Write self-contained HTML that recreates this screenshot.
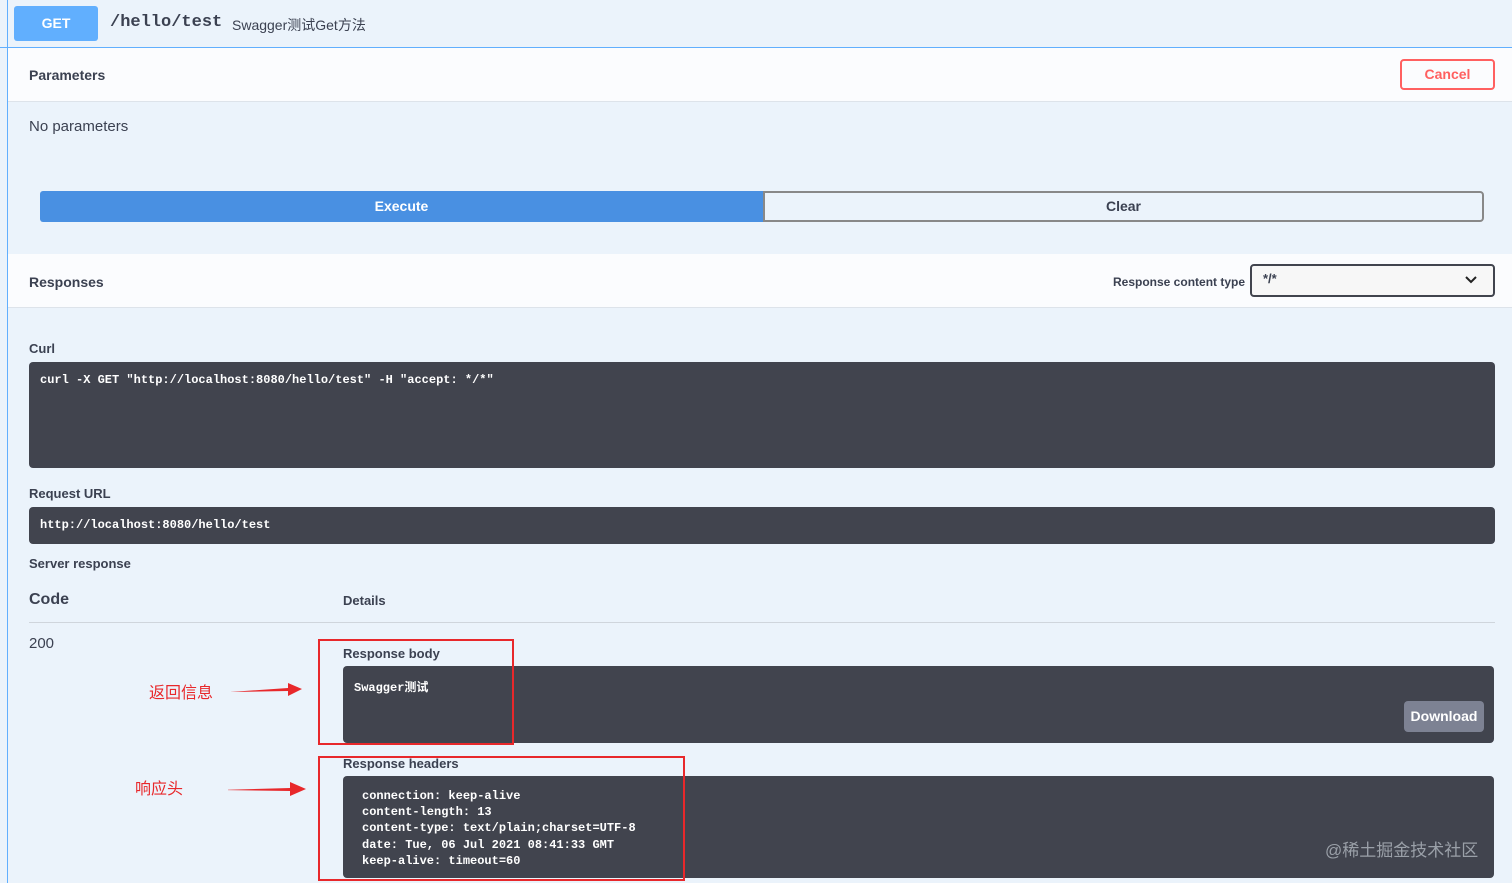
<!DOCTYPE html>
<html><head><meta charset="utf-8"><style>
*{box-sizing:border-box;margin:0;padding:0}
body{width:1512px;height:883px;overflow:hidden;background:#ebf3fb;font-family:"Liberation Sans","Noto Sans CJK SC",sans-serif;color:#3b4151;position:relative}
.abs{position:absolute}
.mono{font-family:"Liberation Mono","Noto Sans CJK SC",monospace}
.dark{background:#41444e;border-radius:4px;color:#fff}
.b{font-weight:bold}
</style></head><body>
<div class="abs" style="left:7px;top:0;width:1px;height:883px;background:#61affe"></div>
<div class="abs" style="left:0;top:47px;width:1512px;height:1px;background:#61affe"></div>
<div class="abs b" style="left:14px;top:6px;width:84px;height:35px;background:#61affe;border-radius:3px;color:#fff;font-size:14px;text-align:center;line-height:35px">GET</div>
<div class="abs mono b" style="left:110px;top:13px;font-size:17px;color:#3b4151">/hello/test</div>
<div class="abs" style="left:232px;top:15px;font-size:14px;color:#3b4151">Swagger测试Get方法</div>
<div class="abs" style="left:8px;top:48px;width:1504px;height:54px;background:#fbfcfe;border-bottom:1px solid #dde3ea"></div>
<div class="abs b" style="left:29px;top:67px;font-size:14px">Parameters</div>
<div class="abs b" style="left:1400px;top:59px;width:95px;height:31px;border:2px solid #ff6060;border-radius:4px;color:#ff6060;font-size:14px;text-align:center;line-height:27px">Cancel</div>
<div class="abs" style="left:29px;top:118px;font-size:15px;color:#3b4151">No parameters</div>
<div class="abs b" style="left:40px;top:191px;width:723px;height:31px;background:#4990e2;color:#fff;font-size:14px;text-align:center;line-height:31px;border-radius:3px 0 0 3px">Execute</div>
<div class="abs b" style="left:763px;top:191px;width:721px;height:31px;border:2px solid #888;border-radius:0 4px 4px 0;font-size:14px;text-align:center;line-height:27px">Clear</div>
<div class="abs" style="left:8px;top:254px;width:1504px;height:54px;background:#fbfcfe;border-bottom:1px solid #dde3ea"></div>
<div class="abs b" style="left:29px;top:274px;font-size:14px">Responses</div>
<div class="abs b" style="left:1113px;top:275px;font-size:12px">Response content type</div>
<div class="abs" style="left:1250px;top:264px;width:245px;height:33px;border:2px solid #41444e;border-radius:4px;background:#f7f7f7"></div>
<div class="abs b" style="left:1263px;top:271px;font-size:13px">*/*</div>
<svg class="abs" style="left:1465px;top:276px" width="12" height="8"><path d="M1 1l5 5 5-5" stroke="#222" stroke-width="2" fill="none"/></svg>
<div class="abs b" style="left:29px;top:341px;font-size:13px">Curl</div>
<div class="abs dark mono b" style="left:29px;top:362px;width:1466px;height:106px;padding:11px;font-size:12px">curl -X GET "http://localhost:8080/hello/test" -H "accept: */*"</div>
<div class="abs b" style="left:29px;top:486px;font-size:13px">Request URL</div>
<div class="abs dark mono b" style="left:29px;top:507px;width:1466px;height:37px;padding:11px;font-size:12px">http://localhost:8080/hello/test</div>
<div class="abs b" style="left:29px;top:556px;font-size:13px">Server response</div>
<div class="abs b" style="left:29px;top:591px;font-size:16px">Code</div>
<div class="abs b" style="left:343px;top:593px;font-size:13px">Details</div>
<div class="abs" style="left:29px;top:622px;width:1466px;height:1px;background:#cfd5dc"></div>
<div class="abs" style="left:29px;top:635px;font-size:15px">200</div>
<div class="abs b" style="left:343px;top:646px;font-size:13px">Response body</div>
<div class="abs dark mono b" style="left:343px;top:666px;width:1151px;height:77px;padding:12px 11px;font-size:12px">Swagger测试</div>
<div class="abs b" style="left:1404px;top:701px;width:80px;height:31px;background:#7d8293;border-radius:4px;color:#fff;font-size:14px;text-align:center;line-height:31px">Download</div>
<div class="abs b" style="left:343px;top:756px;font-size:13px">Response headers</div>
<div class="abs dark mono b" style="left:343px;top:776px;width:1151px;height:102px;padding:12px 19px;font-size:12px;line-height:16.2px;white-space:pre">connection: keep-alive
content-length: 13
content-type: text/plain;charset=UTF-8
date: Tue, 06 Jul 2021 08:41:33 GMT
keep-alive: timeout=60</div>
<div class="abs" style="left:318px;top:639px;width:196px;height:106px;border:2px solid #e8282b"></div>
<div class="abs" style="left:318px;top:756px;width:367px;height:125px;border:2px solid #e8282b"></div>
<div class="abs" style="left:149px;top:679px;font-size:16px;color:#e8282b">返回信息</div>
<div class="abs" style="left:135px;top:775px;font-size:16px;color:#e8282b">响应头</div>
<svg class="abs" style="left:228px;top:680px" width="80" height="120"><path d="M2 12 L60 8 L60 3 L74 9 L60 16 L60 11 Z" fill="#e8282b"/><path d="M-8 110 L62 108 L62 102 L78 109 L62 116 L62 111 Z" fill="#e8282b"/></svg>
<div class="abs" style="left:1325px;top:836px;font-size:17px;color:#9aa0a8">@稀土掘金技术社区</div>
</body></html>
